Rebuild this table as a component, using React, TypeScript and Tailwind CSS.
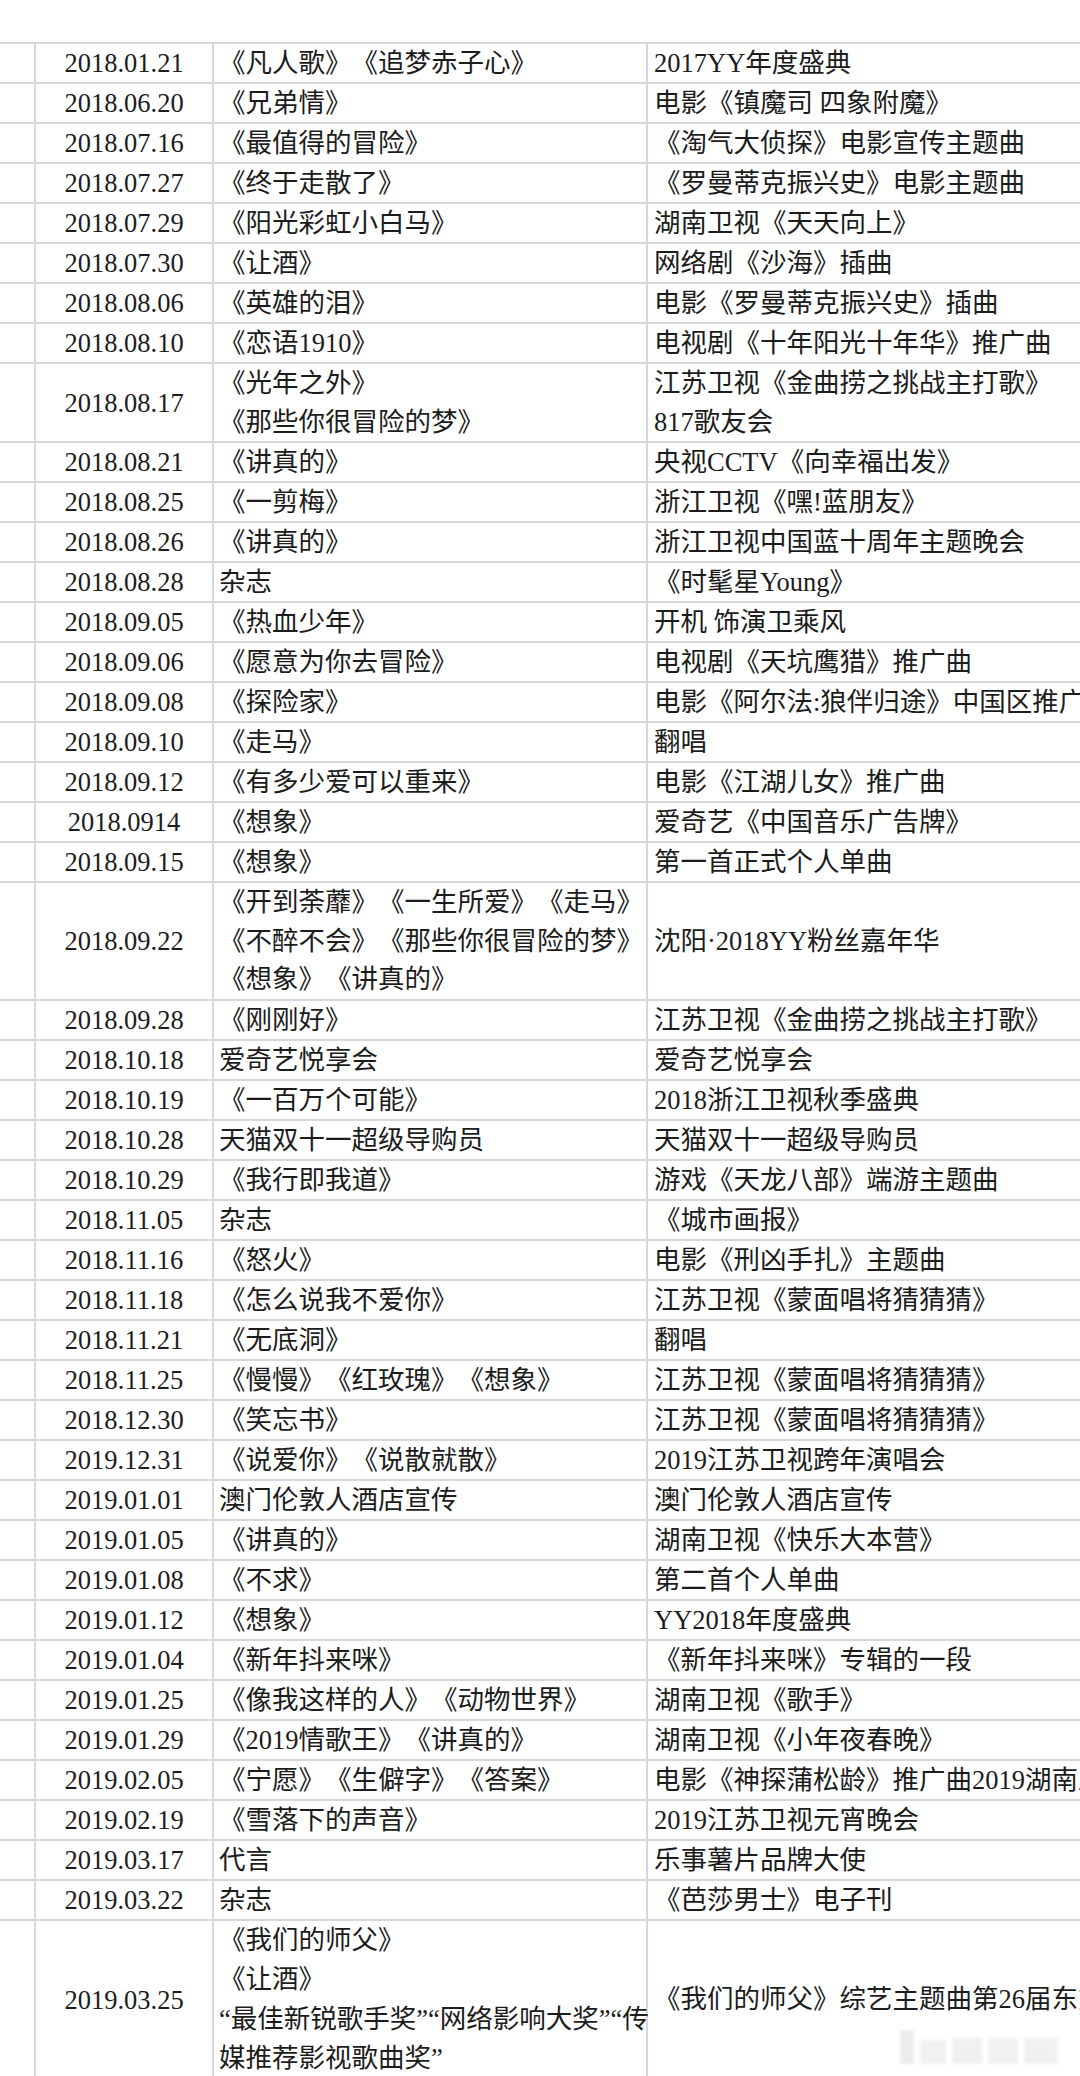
type Row = {
  date: string;
  work: string[];
  note: string[];
  tall?: boolean;
};

const rows: Row[] = [
  { date: "2018.01.21", work: ["《凡人歌》《追梦赤子心》"], note: ["2017YY年度盛典"] },
  { date: "2018.06.20", work: ["《兄弟情》"], note: ["电影《镇魔司 四象附魔》"] },
  { date: "2018.07.16", work: ["《最值得的冒险》"], note: ["《淘气大侦探》电影宣传主题曲"] },
  { date: "2018.07.27", work: ["《终于走散了》"], note: ["《罗曼蒂克振兴史》电影主题曲"] },
  { date: "2018.07.29", work: ["《阳光彩虹小白马》"], note: ["湖南卫视《天天向上》"] },
  { date: "2018.07.30", work: ["《让酒》"], note: ["网络剧《沙海》插曲"] },
  { date: "2018.08.06", work: ["《英雄的泪》"], note: ["电影《罗曼蒂克振兴史》插曲"] },
  { date: "2018.08.10", work: ["《恋语1910》"], note: ["电视剧《十年阳光十年华》推广曲"] },
  {
    date: "2018.08.17",
    work: ["《光年之外》", "《那些你很冒险的梦》"],
    note: ["江苏卫视《金曲捞之挑战主打歌》", "817歌友会"],
  },
  { date: "2018.08.21", work: ["《讲真的》"], note: ["央视CCTV《向幸福出发》"] },
  { date: "2018.08.25", work: ["《一剪梅》"], note: ["浙江卫视《嘿!蓝朋友》"] },
  { date: "2018.08.26", work: ["《讲真的》"], note: ["浙江卫视中国蓝十周年主题晚会"] },
  { date: "2018.08.28", work: ["杂志"], note: ["《时髦星Young》"] },
  { date: "2018.09.05", work: ["《热血少年》"], note: ["开机 饰演卫乘风"] },
  { date: "2018.09.06", work: ["《愿意为你去冒险》"], note: ["电视剧《天坑鹰猎》推广曲"] },
  { date: "2018.09.08", work: ["《探险家》"], note: ["电影《阿尔法:狼伴归途》中国区推广曲"] },
  { date: "2018.09.10", work: ["《走马》"], note: ["翻唱"] },
  { date: "2018.09.12", work: ["《有多少爱可以重来》"], note: ["电影《江湖儿女》推广曲"] },
  { date: "2018.0914", work: ["《想象》"], note: ["爱奇艺《中国音乐广告牌》"] },
  { date: "2018.09.15", work: ["《想象》"], note: ["第一首正式个人单曲"] },
  {
    date: "2018.09.22",
    work: ["《开到荼蘼》《一生所爱》《走马》", "《不醉不会》《那些你很冒险的梦》", "《想象》《讲真的》"],
    note: ["沈阳·2018YY粉丝嘉年华"],
  },
  { date: "2018.09.28", work: ["《刚刚好》"], note: ["江苏卫视《金曲捞之挑战主打歌》"] },
  { date: "2018.10.18", work: ["爱奇艺悦享会"], note: ["爱奇艺悦享会"] },
  { date: "2018.10.19", work: ["《一百万个可能》"], note: ["2018浙江卫视秋季盛典"] },
  { date: "2018.10.28", work: ["天猫双十一超级导购员"], note: ["天猫双十一超级导购员"] },
  { date: "2018.10.29", work: ["《我行即我道》"], note: ["游戏《天龙八部》端游主题曲"] },
  { date: "2018.11.05", work: ["杂志"], note: ["《城市画报》"] },
  { date: "2018.11.16", work: ["《怒火》"], note: ["电影《刑凶手扎》主题曲"] },
  { date: "2018.11.18", work: ["《怎么说我不爱你》"], note: ["江苏卫视《蒙面唱将猜猜猜》"] },
  { date: "2018.11.21", work: ["《无底洞》"], note: ["翻唱"] },
  { date: "2018.11.25", work: ["《慢慢》《红玫瑰》《想象》"], note: ["江苏卫视《蒙面唱将猜猜猜》"] },
  { date: "2018.12.30", work: ["《笑忘书》"], note: ["江苏卫视《蒙面唱将猜猜猜》"] },
  { date: "2019.12.31", work: ["《说爱你》《说散就散》"], note: ["2019江苏卫视跨年演唱会"] },
  { date: "2019.01.01", work: ["澳门伦敦人酒店宣传"], note: ["澳门伦敦人酒店宣传"] },
  { date: "2019.01.05", work: ["《讲真的》"], note: ["湖南卫视《快乐大本营》"] },
  { date: "2019.01.08", work: ["《不求》"], note: ["第二首个人单曲"] },
  { date: "2019.01.12", work: ["《想象》"], note: ["YY2018年度盛典"] },
  { date: "2019.01.04", work: ["《新年抖来咪》"], note: ["《新年抖来咪》专辑的一段"] },
  { date: "2019.01.25", work: ["《像我这样的人》《动物世界》"], note: ["湖南卫视《歌手》"] },
  { date: "2019.01.29", work: ["《2019情歌王》《讲真的》"], note: ["湖南卫视《小年夜春晚》"] },
  { date: "2019.02.05", work: ["《宁愿》《生僻字》《答案》"], note: ["电影《神探蒲松龄》推广曲2019湖南卫视元宵喜乐会"] },
  { date: "2019.02.19", work: ["《雪落下的声音》"], note: ["2019江苏卫视元宵晚会"] },
  { date: "2019.03.17", work: ["代言"], note: ["乐事薯片品牌大使"] },
  { date: "2019.03.22", work: ["杂志"], note: ["《芭莎男士》电子刊"] },
  {
    date: "2019.03.25",
    work: ["《我们的师父》", "《让酒》", "“最佳新锐歌手奖”“网络影响大奖”“传", "媒推荐影视歌曲奖”"],
    note: ["《我们的师父》综艺主题曲第26届东方风云榜"],
    tall: true,
  },
];

function TableRow({ row }: { row: Row }) {
  const multi = row.work.length > 1 || row.note.length > 1;
  const lead = row.tall ? "leading-[39.5px]" : multi ? "leading-[38.5px]" : "leading-[38px]";

  return (
    <div className={`flex border-b-2 border-[#d7d8df] ${multi ? "" : "h-[40px]"}`}>
      <div className="w-[36px] shrink-0 border-r-2 border-[#d7d8df]" />
      <div className="w-[178px] shrink-0 border-r-2 border-[#d7d8df] flex items-center justify-center leading-[38px]">
        {row.date}
      </div>
      <div className={`w-[434px] shrink-0 border-r-2 border-[#d7d8df] flex flex-col justify-center pl-[5px] ${lead}`}>
        {row.work.map((line, i) => (
          <span key={i} className="whitespace-nowrap">
            {line}
          </span>
        ))}
      </div>
      <div className={`flex-1 min-w-0 overflow-hidden flex flex-col justify-center pl-[6px] ${lead}`}>
        {row.note.map((line, i) => (
          <span key={i} className="whitespace-nowrap">
            {line}
          </span>
        ))}
      </div>
    </div>
  );
}

export default function App() {
  return (
    <div
      className="relative w-[1080px] h-[2076px] overflow-hidden bg-white pt-[42px] text-[26.5px] text-[#1c1c1c] [text-spacing-trim:space-all]"
      style={{ fontFamily: '"Liberation Serif", "Noto Sans CJK SC", serif' }}
    >
      <div className="border-t-2 border-[#d7d8df]">
        {rows.map((row) => (
          <TableRow key={row.date + row.work[0]} row={row} />
        ))}
      </div>

      {/* faint watermark, bottom right */}
      <div className="absolute left-[900px] top-[2030px] flex items-end gap-[6px] opacity-70 blur-[1.5px]">
        <div className="w-[14px] h-[34px] bg-[#e4e4e6]" />
        <div className="w-[26px] h-[24px] bg-[#ececee]" />
        <div className="w-[30px] h-[26px] bg-[#ebebed]" />
        <div className="w-[30px] h-[26px] bg-[#ececee]" />
        <div className="w-[34px] h-[26px] bg-[#ebebed]" />
      </div>
    </div>
  );
}
